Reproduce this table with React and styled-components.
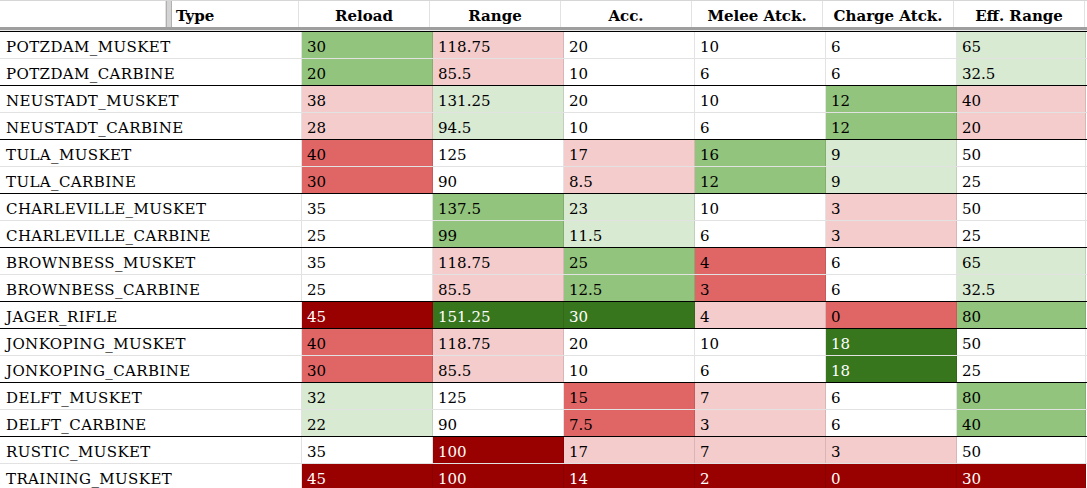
import React from 'react';
import styled, { createGlobalStyle } from 'styled-components';

const GlobalStyle = createGlobalStyle`
  html, body {
    margin: 0;
    padding: 0;
    background: #ffffff;
  }
  body {
    font-family: "DejaVu Serif", "Liberation Serif", serif;
    color: #000;
    overflow: hidden;
  }
`;

const fills = {
  w: { bg: '#ffffff', fg: '#000000' },
  lg: { bg: '#d9ead3', fg: '#000000' },
  mg: { bg: '#93c47d', fg: '#000000' },
  dg: { bg: '#38761d', fg: '#ffffff' },
  lr: { bg: '#f4cccc', fg: '#000000' },
  mr: { bg: '#e06666', fg: '#000000' },
  dr: { bg: '#990000', fg: '#ffffff' },
};

const columns = ['Reload', 'Range', 'Acc.', 'Melee Atck.', 'Charge Atck.', 'Eff. Range'];

const rows = [
  ['POTZDAM_MUSKET', [['30', 'mg'], ['118.75', 'lr'], ['20', 'w'], ['10', 'w'], ['6', 'w'], ['65', 'lg']]],
  ['POTZDAM_CARBINE', [['20', 'mg'], ['85.5', 'lr'], ['10', 'w'], ['6', 'w'], ['6', 'w'], ['32.5', 'lg']], true],
  ['NEUSTADT_MUSKET', [['38', 'lr'], ['131.25', 'lg'], ['20', 'w'], ['10', 'w'], ['12', 'mg'], ['40', 'lr']]],
  ['NEUSTADT_CARBINE', [['28', 'lr'], ['94.5', 'lg'], ['10', 'w'], ['6', 'w'], ['12', 'mg'], ['20', 'lr']], true],
  ['TULA_MUSKET', [['40', 'mr'], ['125', 'w'], ['17', 'lr'], ['16', 'mg'], ['9', 'lg'], ['50', 'w']]],
  ['TULA_CARBINE', [['30', 'mr'], ['90', 'w'], ['8.5', 'lr'], ['12', 'mg'], ['9', 'lg'], ['25', 'w']], true],
  ['CHARLEVILLE_MUSKET', [['35', 'w'], ['137.5', 'mg'], ['23', 'lg'], ['10', 'w'], ['3', 'lr'], ['50', 'w']]],
  ['CHARLEVILLE_CARBINE', [['25', 'w'], ['99', 'mg'], ['11.5', 'lg'], ['6', 'w'], ['3', 'lr'], ['25', 'w']], true],
  ['BROWNBESS_MUSKET', [['35', 'w'], ['118.75', 'lr'], ['25', 'mg'], ['4', 'mr'], ['6', 'w'], ['65', 'lg']]],
  ['BROWNBESS_CARBINE', [['25', 'w'], ['85.5', 'lr'], ['12.5', 'mg'], ['3', 'mr'], ['6', 'w'], ['32.5', 'lg']], true],
  ['JAGER_RIFLE', [['45', 'dr'], ['151.25', 'dg'], ['30', 'dg'], ['4', 'lr'], ['0', 'mr'], ['80', 'mg']], true],
  ['JONKOPING_MUSKET', [['40', 'mr'], ['118.75', 'lr'], ['20', 'w'], ['10', 'w'], ['18', 'dg'], ['50', 'w']]],
  ['JONKOPING_CARBINE', [['30', 'mr'], ['85.5', 'lr'], ['10', 'w'], ['6', 'w'], ['18', 'dg'], ['25', 'w']], true],
  ['DELFT_MUSKET', [['32', 'lg'], ['125', 'w'], ['15', 'mr'], ['7', 'lr'], ['6', 'w'], ['80', 'mg']]],
  ['DELFT_CARBINE', [['22', 'lg'], ['90', 'w'], ['7.5', 'mr'], ['3', 'lr'], ['6', 'w'], ['40', 'mg']], true],
  ['RUSTIC_MUSKET', [['35', 'w'], ['100', 'dr'], ['17', 'lr'], ['7', 'lr'], ['3', 'lr'], ['50', 'w']]],
  ['TRAINING_MUSKET', [['45', 'dr'], ['100', 'dr'], ['14', 'dr'], ['2', 'dr'], ['0', 'dr'], ['30', 'dr']]],
];

const Sheet = styled.div`
  width: 1087px;
  height: 488px;
  overflow: hidden;
  background: #fff;
`;

const HeaderRow = styled.div`
  display: grid;
  grid-template-columns: 166px 6px 127px repeat(6, 131px);
  height: 27px;
  border-top: 1px solid #d6d6d6;
  box-sizing: border-box;
`;

const Blank = styled.div`
  border-right: 1px solid #e2e2e2;
`;

const Gutter = styled.div`
  background: #d4d4d4;
  border-left: 1px solid #b0b0b0;
  border-right: 1px solid #b0b0b0;
`;

const HeadCell = styled.div`
  display: flex;
  align-items: center;
  justify-content: ${p => (p.$left ? 'flex-start' : 'center')};
  padding: 3px ${p => (p.$left ? '4px' : '0')} 0;
  font-weight: bold;
  font-size: 15px;
  border-right: 1px solid #e2e2e2;
  white-space: nowrap;
`;

const Freeze = styled.div`
  height: 3px;
  background: #9e9e9e;
  border-bottom: 1px solid #e8e8e8;
`;

const Row = styled.div`
  display: grid;
  grid-template-columns: 302px repeat(5, 131px) 129px;
  height: ${p => (p.$first ? '28px' : '27px')};
  box-sizing: border-box;
  border-top: ${p => (p.$first ? '1px solid #000' : 'none')};
  border-bottom: 1px solid ${p => (p.$groupEnd ? '#000' : '#e2e2e2')};
`;

const Cell = styled.div`
  display: flex;
  align-items: flex-end;
  padding: 0 5px 2px;
  font-size: 15px;
  line-height: 18px;
  background: ${p => fills[p.$fill].bg};
  color: ${p => fills[p.$fill].fg};
  border-right: 1px solid rgba(0, 0, 0, 0.11);
  white-space: nowrap;
  overflow: hidden;
`;

const NameCell = styled(Cell)`
  padding-left: 6px;
  letter-spacing: 0.4px;
  border-right-color: #e2e2e2;
`;

const App = () => (
  <>
    <GlobalStyle />
    <Sheet>
      <HeaderRow>
        <Blank />
        <Gutter />
        <HeadCell $left>Type</HeadCell>
        {columns.map(c => (
          <HeadCell key={c}>{c}</HeadCell>
        ))}
      </HeaderRow>
      <Freeze />
      {rows.map(([name, cells, groupEnd], i) => (
        <Row key={name} $groupEnd={groupEnd} $first={i === 0}>
          <NameCell $fill="w">{name}</NameCell>
          {cells.map(([value, fill], j) => (
            <Cell key={j} $fill={fill}>
              {value}
            </Cell>
          ))}
        </Row>
      ))}
    </Sheet>
  </>
);

export default App;
